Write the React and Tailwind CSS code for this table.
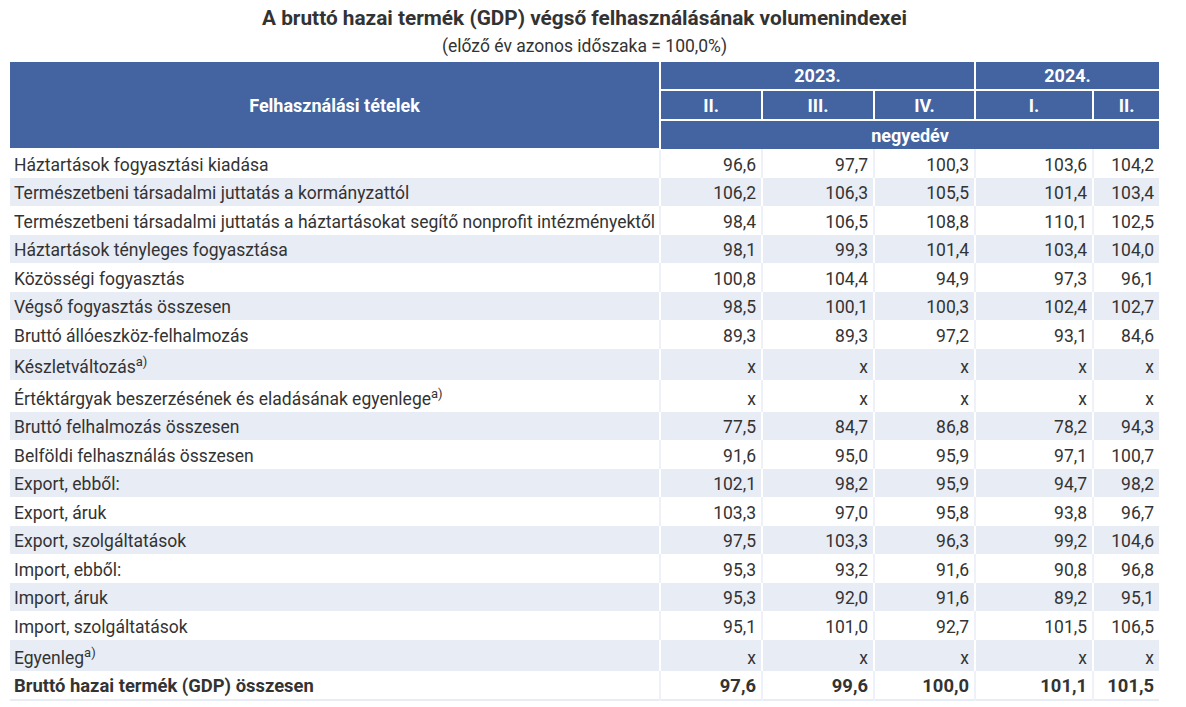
import React from 'react'

const rows = [
  { label: "Háztartások fogyasztási kiadása", v: ["96,6", "97,7", "100,3", "103,6", "104,2"] },
  { label: "Természetbeni társadalmi juttatás a kormányzattól", v: ["106,2", "106,3", "105,5", "101,4", "103,4"] },
  { label: "Természetbeni társadalmi juttatás a háztartásokat segítő nonprofit intézményektől", v: ["98,4", "106,5", "108,8", "110,1", "102,5"] },
  { label: "Háztartások tényleges fogyasztása", v: ["98,1", "99,3", "101,4", "103,4", "104,0"] },
  { label: "Közösségi fogyasztás", v: ["100,8", "104,4", "94,9", "97,3", "96,1"] },
  { label: "Végső fogyasztás összesen", v: ["98,5", "100,1", "100,3", "102,4", "102,7"] },
  { label: "Bruttó állóeszköz-felhalmozás", v: ["89,3", "89,3", "97,2", "93,1", "84,6"] },
  { label: "Készletváltozás", note: true, v: ["x", "x", "x", "x", "x"] },
  { label: "Értéktárgyak beszerzésének és eladásának egyenlege", note: true, v: ["x", "x", "x", "x", "x"] },
  { label: "Bruttó felhalmozás összesen", v: ["77,5", "84,7", "86,8", "78,2", "94,3"] },
  { label: "Belföldi felhasználás összesen", v: ["91,6", "95,0", "95,9", "97,1", "100,7"] },
  { label: "Export, ebből:", v: ["102,1", "98,2", "95,9", "94,7", "98,2"] },
  { label: "Export, áruk", v: ["103,3", "97,0", "95,8", "93,8", "96,7"] },
  { label: "Export, szolgáltatások", v: ["97,5", "103,3", "96,3", "99,2", "104,6"] },
  { label: "Import, ebből:", v: ["95,3", "93,2", "91,6", "90,8", "96,8"] },
  { label: "Import, áruk", v: ["95,3", "92,0", "91,6", "89,2", "95,1"] },
  { label: "Import, szolgáltatások", v: ["95,1", "101,0", "92,7", "101,5", "106,5"] },
  { label: "Egyenleg", note: true, v: ["x", "x", "x", "x", "x"] },
  { label: "Bruttó hazai termék (GDP) összesen", bold: true, v: ["97,6", "99,6", "100,0", "101,1", "101,5"] },
]

const th = "bg-[#4364a0] text-white font-bold text-center text-[18px] border-2 border-white"

export default function App() {
  return (
    <div className="w-[1186px] bg-white font-['Roboto',sans-serif] text-[#333333]">
      <div className="w-[1149px] ml-[10px]">
        <h1 className="text-center text-[20.8px] leading-[24px] font-bold pt-[6px]">
          A bruttó hazai termék (GDP) végső felhasználásának volumenindexei
        </h1>
        <p className="text-center text-[17.5px] leading-[22px] mt-[5px] mb-[5px]">
          (előző év azonos időszaka = 100,0%)
        </p>
        <table className="w-[1149px] border-collapse table-fixed text-[17.5px]">
          <colgroup>
            <col className="w-[650px]" />
            <col className="w-[102px]" />
            <col className="w-[112px]" />
            <col className="w-[101px]" />
            <col className="w-[118px]" />
            <col className="w-[66px]" />
          </colgroup>
          <thead>
            <tr className="h-[28px]">
              <th rowSpan={3} className={`${th} border-t-0 border-l-0`}>Felhasználási tételek</th>
              <th colSpan={3} className={`${th} border-t-0`}>2023.</th>
              <th colSpan={2} className={`${th} border-t-0 border-r-0`}>2024.</th>
            </tr>
            <tr className="h-[30px]">
              <th className={th}>II.</th>
              <th className={th}>III.</th>
              <th className={th}>IV.</th>
              <th className={th}>I.</th>
              <th className={`${th} border-r-0`}>II.</th>
            </tr>
            <tr className="h-[29px]">
              <th colSpan={5} className={`${th} border-r-0 border-b-0`}>negyedév</th>
            </tr>
          </thead>
          <tbody>
            {rows.map((r, i) => (
              <tr
                key={i}
                className={`${i % 2 === 1 ? "bg-[#e8ecf5]" : "bg-white"} ${r.note ? "h-[31.5px]" : "h-[28.5px]"} ${r.bold ? "font-bold text-[18.4px]" : ""} ${i === rows.length - 1 ? "border-b-2 border-[#e8ecf5]" : ""}`}
              >
                <td className={`pl-[4px] pr-1 leading-[20px] whitespace-nowrap border-r-2 ${i % 2 === 1 ? "border-white" : "border-[#eef1f8]"} ${r.note ? "align-bottom pb-[3px]" : "pt-[3px]"}`}>
                  {r.label}
                  {r.note && <sup className="text-[13px] align-super top-0">a)</sup>}
                </td>
                {r.v.map((v, j) => (
                  <td
                    key={j}
                    className={`text-right pr-[5px] leading-[20px] ${r.note ? "align-bottom pb-[3px]" : "pt-[3px]"} ${j < 4 ? "border-r-2" : ""} ${i % 2 === 1 ? "border-white" : "border-[#eef1f8]"}`}
                  >
                    {v}
                  </td>
                ))}
              </tr>
            ))}
          </tbody>
        </table>
      </div>
    </div>
  )
}
